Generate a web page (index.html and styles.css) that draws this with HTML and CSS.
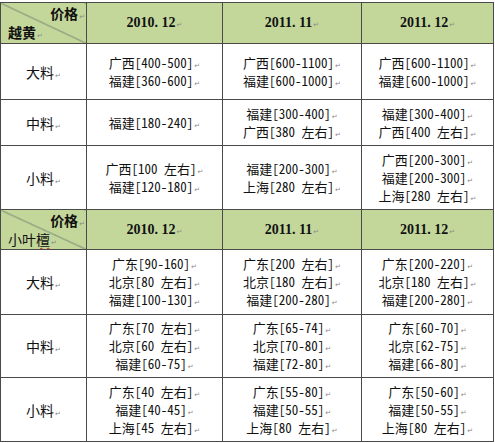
FILE: index.html
```html
<!DOCTYPE html>
<html lang="zh-CN">
<head>
<meta charset="utf-8">
<title>价格表</title>
<link rel="stylesheet" href="styles.css">
</head>
<body>
<table class="price">
  <colgroup>
    <col class="c0"><col class="c1"><col class="c2"><col class="c3">
  </colgroup>
  <tr class="head r-h1">
    <td class="corner">
      <div class="corner-in">
        <span class="lbl-top b">价格<span class="ret">↵</span></span>
        <span class="lbl-bot b">越黄<span class="ret">↵</span></span>
      </div>
    </td>
    <td class="date">2010. 12<span class="ret">↵</span></td>
    <td class="date">2011. 11<span class="ret">↵</span></td>
    <td class="date">2011. 12<span class="ret">↵</span></td>
  </tr>
  <tr class="r-a1">
    <td class="kind">大料<span class="ret">↵</span></td>
    <td><p class="ln">广西[400-500]<span class="ret">↵</span></p><p class="ln">福建[360-600]<span class="ret">↵</span></p></td>
    <td><p class="ln">广西[600-1100]<span class="ret">↵</span></p><p class="ln">福建[600-1000]<span class="ret">↵</span></p></td>
    <td><p class="ln">广西[600-1100]<span class="ret">↵</span></p><p class="ln">福建[600-1000]<span class="ret">↵</span></p></td>
  </tr>
  <tr class="r-b1">
    <td class="kind">中料<span class="ret">↵</span></td>
    <td><p class="ln">福建[180-240]<span class="ret">↵</span></p></td>
    <td><p class="ln">福建[300-400]<span class="ret">↵</span></p><p class="ln">广西[380 左右]<span class="ret">↵</span></p></td>
    <td><p class="ln">福建[300-400]<span class="ret">↵</span></p><p class="ln">广西[400 左右]<span class="ret">↵</span></p></td>
  </tr>
  <tr class="r-c1">
    <td class="kind">小料<span class="ret">↵</span></td>
    <td><p class="ln">广西[100 左右]<span class="ret">↵</span></p><p class="ln">福建[120-180]<span class="ret">↵</span></p></td>
    <td><p class="ln">福建[200-300]<span class="ret">↵</span></p><p class="ln">上海[280 左右]<span class="ret">↵</span></p></td>
    <td><p class="ln">广西[200-300]<span class="ret">↵</span></p><p class="ln">福建[200-300]<span class="ret">↵</span></p><p class="ln">上海[280 左右]<span class="ret">↵</span></p></td>
  </tr>
  <tr class="head r-h2">
    <td class="corner">
      <div class="corner-in">
        <span class="lbl-top b">价格<span class="ret">↵</span></span>
        <span class="lbl-bot">小叶<span class="typo">檀</span><span class="ret">↵</span></span>
      </div>
    </td>
    <td class="date">2010. 12<span class="ret">↵</span></td>
    <td class="date">2011. 11<span class="ret">↵</span></td>
    <td class="date">2011. 12<span class="ret">↵</span></td>
  </tr>
  <tr class="r-a2">
    <td class="kind">大料<span class="ret">↵</span></td>
    <td><p class="ln">广东[90-160]<span class="ret">↵</span></p><p class="ln">北京[80 左右]<span class="ret">↵</span></p><p class="ln">福建[100-130]<span class="ret">↵</span></p></td>
    <td><p class="ln">广东[200 左右]<span class="ret">↵</span></p><p class="ln">北京[180 左右]<span class="ret">↵</span></p><p class="ln">福建[200-280]<span class="ret">↵</span></p></td>
    <td><p class="ln">广东[200-220]<span class="ret">↵</span></p><p class="ln">北京[180 左右]<span class="ret">↵</span></p><p class="ln">福建[200-280]<span class="ret">↵</span></p></td>
  </tr>
  <tr class="r-b2">
    <td class="kind">中料<span class="ret">↵</span></td>
    <td><p class="ln">广东[70 左右]<span class="ret">↵</span></p><p class="ln">北京[60 左右]<span class="ret">↵</span></p><p class="ln">福建[60-75]<span class="ret">↵</span></p></td>
    <td><p class="ln">广东[65-74]<span class="ret">↵</span></p><p class="ln">北京[70-80]<span class="ret">↵</span></p><p class="ln">福建[72-80]<span class="ret">↵</span></p></td>
    <td><p class="ln">广东[60-70]<span class="ret">↵</span></p><p class="ln">北京[62-75]<span class="ret">↵</span></p><p class="ln">福建[66-80]<span class="ret">↵</span></p></td>
  </tr>
  <tr class="r-c2">
    <td class="kind">小料<span class="ret">↵</span></td>
    <td><p class="ln">广东[40 左右]<span class="ret">↵</span></p><p class="ln">福建[40-45]<span class="ret">↵</span></p><p class="ln">上海[45 左右]<span class="ret">↵</span></p></td>
    <td><p class="ln">广东[55-80]<span class="ret">↵</span></p><p class="ln">福建[50-55]<span class="ret">↵</span></p><p class="ln">上海[80 左右]<span class="ret">↵</span></p></td>
    <td><p class="ln">广东[50-60]<span class="ret">↵</span></p><p class="ln">福建[50-55]<span class="ret">↵</span></p><p class="ln">上海[80 左右]<span class="ret">↵</span></p></td>
  </tr>
</table>
</body>
</html>
```
FILE: styles.css
```css
html, body {
  margin: 0;
  padding: 0;
  background: #ffffff;
}

body {
  font-family: "Noto Sans Mono CJK SC", "Noto Sans CJK SC", sans-serif;
  font-size: 13px;
  color: #111111;
}

.price {
  margin-top: 2px;
  border-collapse: collapse;
  table-layout: fixed;
  width: 493px;
}

.c0 { width: 86px; }
.c1 { width: 136px; }
.c2 { width: 139px; }
.c3 { width: 132px; }

.price td {
  border: 1px solid #4a4a4a;
  padding: 0;
  text-align: center;
  vertical-align: middle;
  line-height: 18px;
  white-space: nowrap;
  overflow: hidden;
}

.ln {
  margin: 0;
  height: 18px;
}

.r-h1 { height: 41px; }
.r-a1 { height: 56px; }
.r-b1 { height: 46px; }
.r-c1 { height: 64px; }
.r-h2 { height: 40px; }
.r-a2 { height: 65px; }
.r-b2 { height: 63px; }
.r-c2 { height: 64px; }

.head td {
  background: #c4d79b;
}

.date {
  font-family: "Liberation Serif", "Noto Sans CJK SC", serif;
  font-weight: bold;
  font-size: 14px;
}

.kind {
  font-size: 14px;
}

.corner {
  background: linear-gradient(to top right,
      #c4d79b calc(50% - 0.8px),
      #6b786a 50%,
      #c4d79b calc(50% + 0.8px)) !important;
}

.corner-in {
  display: flex;
  flex-direction: column;
  justify-content: space-between;
  height: 36px;
  padding: 0 1px 0 7px;
  font-size: 14px;
  line-height: 17px;
}

.lbl-top {
  align-self: flex-end;
}

.lbl-bot {
  align-self: flex-start;
}

.b {
  font-weight: bold;
}

.typo {
  text-decoration: underline wavy #d02020;
  text-decoration-thickness: 1px;
  text-underline-offset: 2px;
}

.ret {
  font-family: "DejaVu Sans", sans-serif;
  font-size: 7px;
  line-height: 0;
  font-weight: normal;
  color: #8a8a8a;
  margin-left: 1px;
}
```
